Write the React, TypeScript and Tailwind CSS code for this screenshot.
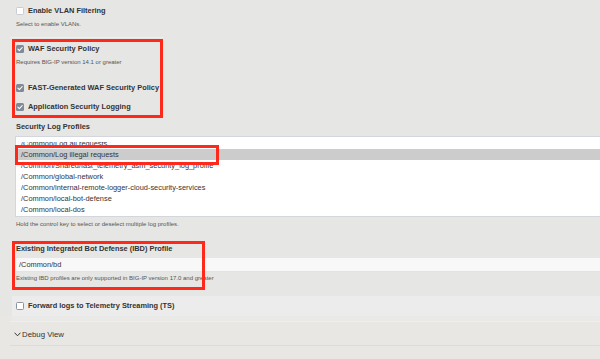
import React from 'react';

const Box: React.FC<{ checked?: boolean; border?: string }> = ({ checked, border = 'border-[#c9ccd1]' }) =>
  checked ? (
    <span className="flex h-[8px] w-[8px] shrink-0 items-center justify-center rounded-[1.5px] bg-[#808a96]">
      <svg viewBox="0 0 8 8" className="h-[8px] w-[8px]">
        <path d="M1.9 4.1 3.4 5.6 6.2 2.5" fill="none" stroke="#fff" strokeWidth="1.1" strokeLinecap="round" strokeLinejoin="round" />
      </svg>
    </span>
  ) : (
    <span className={`h-[8px] w-[8px] shrink-0 rounded-[1.5px] border bg-white ${border}`} />
  );

const CheckRow: React.FC<{ label: string; checked?: boolean; border?: string }> = ({ label, checked, border }) => (
  <div className="flex h-[14px] items-center gap-[4px]">
    <Box checked={checked} border={border} />
    <span className="text-[7.4px] font-bold leading-none text-[#333]">{label}</span>
  </div>
);

const Help: React.FC<{ children: React.ReactNode; className?: string }> = ({ children, className = '' }) => (
  <p className={`h-[9px] whitespace-nowrap text-[6px] leading-[9px] text-[#555] ${className}`}>{children}</p>
);

const profiles = [
  '/Common/Log all requests',
  '/Common/Log illegal requests',
  '/Common/Shared/fast_telemetry_asm_security_log_profile',
  '/Common/global-network',
  '/Common/internal-remote-logger-cloud-security-services',
  '/Common/local-bot-defense',
  '/Common/local-dos',
];

export default function App() {
  return (
    <div className="flex h-[359px] w-[600px] flex-col overflow-hidden bg-[#e6e6e4] font-['Liberation_Sans',Arial,sans-serif] text-[#333]">
      {/* VLAN */}
      <div className="pl-4 pt-1">
        <CheckRow label="Enable VLAN Filtering" />
        <Help className="mt-[2px]">Select to enable VLANs.</Help>
      </div>
      <div className="ml-[10px] mt-[8px] w-[153px] border-t border-[#efefed]" />

      {/* WAF options */}
      <div className="ml-3 mt-[1px] w-[151px] border-[3px] border-[#fd2a1b] pb-[1px] pl-[1px]">
        <CheckRow label="WAF Security Policy" checked />
        <Help className="mt-[2px]">Requires BIG-IP version 14.1 or greater</Help>
        <div className="mt-[14px]">
          <CheckRow label="FAST-Generated WAF Security Policy" checked />
        </div>
        <div className="mt-[5px]">
          <CheckRow label="Application Security Logging" checked />
        </div>
      </div>

      {/* Security log profiles */}
      <div className="mt-[2px] flex h-[14px] items-center pl-4">
        <span className="text-[7.4px] font-bold leading-none">Security Log Profiles</span>
      </div>
      <div className="relative ml-[15px] mt-[2px] h-[81px] w-[600px] shrink-0 border border-[#d3d6dc] bg-white pt-[5px]">
        <div className="h-[74px] overflow-hidden">
          <div className="-mt-[4px]">
            {profiles.map((p, i) => (
              <div
                key={p}
                className={`h-[11px] whitespace-nowrap pl-[5px] text-[7.4px] leading-[11px] text-[#333] ${i === 1 ? 'bg-[#cccccc]' : ''}`}
              >
                {p}
              </div>
            ))}
          </div>
        </div>
        <div className="pointer-events-none absolute left-[-1px] top-[8px] h-[20px] w-[204px] border-[3px] border-[#fd2a1b]" />
      </div>
      <Help className="mt-[3px] pl-4">Hold the control key to select or deselect multiple log profiles.</Help>

      {/* IBD profile */}
      <div className="relative mt-[12px] pt-[3px]">
        <div className="flex h-[10px] items-center pl-4">
          <span className="text-[7.4px] font-bold leading-none">Existing Integrated Bot Defense (IBD) Profile</span>
        </div>
        <div className="ml-4 mt-[4px] flex h-[14px] items-center border-b border-[#e3e3e1] bg-[#f8f8f8] pl-[3px]">
          <span className="text-[7.4px] leading-none">/Common/bd</span>
        </div>
        <Help className="mt-[2px] pl-4">Existing IBD profiles are only supported in BIG-IP version 17.0 and greater</Help>
        <div className="pointer-events-none absolute left-3 top-0 h-[49px] w-[193px] border-[3px] border-[#fd2a1b]" />
      </div>

      {/* Telemetry */}
      <div className="ml-3 mt-[13px] flex h-[20px] items-center bg-[#ececec] pl-1">
        <CheckRow label="Forward logs to Telemetry Streaming (TS)" border="border-[#8d939c]" />
      </div>
      <div className="flex flex-1 flex-col bg-[#e8e7e4]">
        <div className="ml-3 h-[5px] bg-[#e9e9e7]" />
        <div className="ml-[10px] flex h-[25px] items-center gap-[1px] border-t border-[#eeeeec] border-b border-b-[#d8dbe3] pl-1 pt-[2px]">
          <svg viewBox="0 0 7 5" className="h-[5px] w-[7px]">
            <path d="M0.8 1 3.5 3.8 6.2 1" fill="none" stroke="#333" strokeWidth="1" strokeLinecap="round" strokeLinejoin="round" />
          </svg>
          <span className="text-[7.8px] leading-none text-[#333]">Debug View</span>
        </div>
      </div>
    </div>
  );
}
